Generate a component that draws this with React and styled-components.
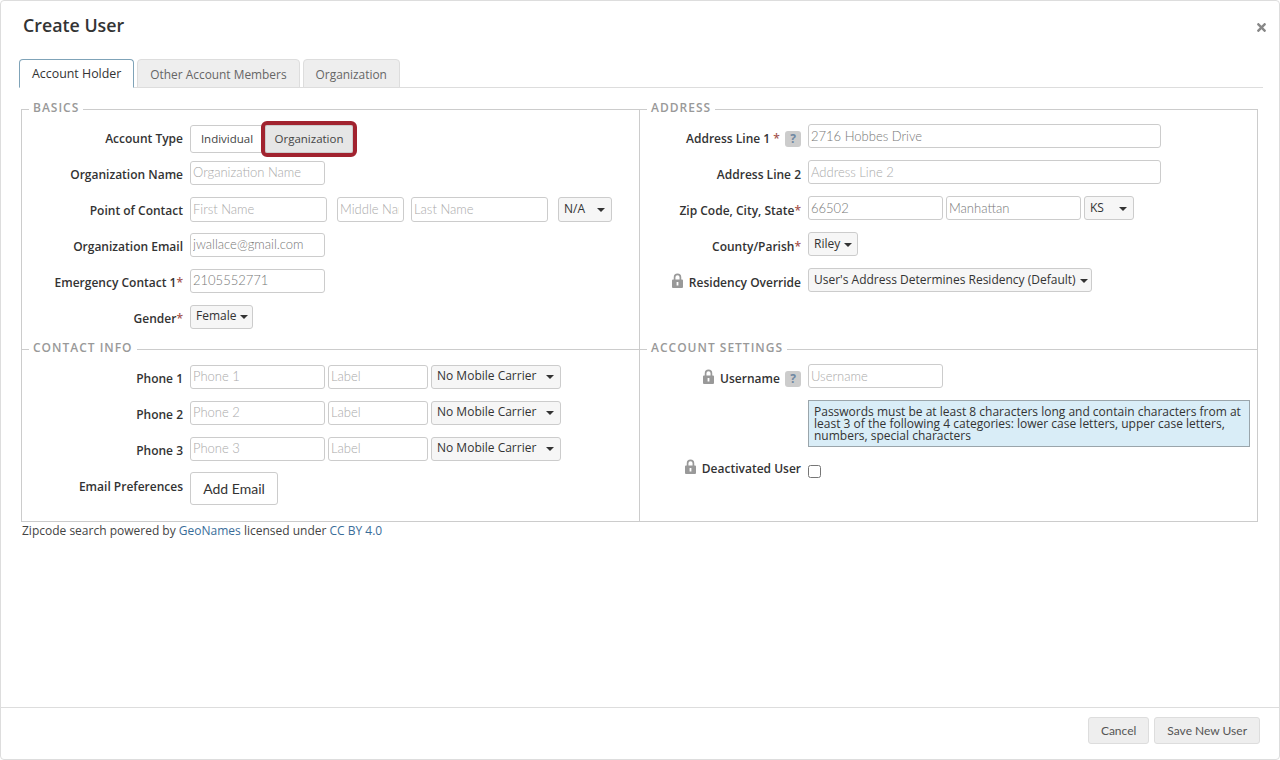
import React from 'react';
import styled, { createGlobalStyle } from 'styled-components';
import { FaTimes } from 'react-icons/fa';

const GlobalStyle = createGlobalStyle`
  html, body {
    margin: 0;
    background: #fff;
  }
  * {
    box-sizing: border-box;
  }
`;

// Modal shell
const Modal = styled.div`
  width: 1280px;
  height: 760px;
  display: flex;
  flex-direction: column;
  border: 1px solid #ddd;
  border-radius: 4px;
  background: #fff;
  color: #333;
  font-family: "Open Sans", sans-serif;
  font-size: 12px;
  overflow: hidden;
`;

const Header = styled.div`
  height: 58px;
  display: flex;
  justify-content: space-between;
  padding: 12px 11px 0 22px;
`;

const Title = styled.h1`
  margin: 0;
  font-size: 17.8px;
  line-height: 25px;
  font-weight: 600;
  color: #333;
`;

const Close = styled.div`
  margin-top: 8px;
  color: #888;
  font-size: 13px;
  line-height: 13px;
`;

// Tabs
const TabBar = styled.div`
  height: 29px;
  margin: 0 16px 0 18px;
  display: flex;
  gap: 3px;
  border-bottom: 1px solid #ddd;
`;

const Tab = styled.div`
  height: 29px;
  padding: 0 12px;
  display: flex;
  align-items: center;
  border: 1px solid ${(p) => (p.$active ? '#7fa3b8' : '#ddd')};
  border-bottom: ${(p) => (p.$active ? '1px solid #fff' : '1px solid #ddd')};
  border-radius: 4px 4px 0 0;
  background: ${(p) => (p.$active ? '#fff' : '#eee')};
  color: ${(p) => (p.$active ? '#333' : '#666')};
  font-size: ${(p) => (p.$active ? 12.4 : 11.9)}px;
  font-weight: ${(p) => (p.$active ? 500 : 400)};
`;

// Form panel
const Panel = styled.div`
  width: 1237px;
  margin: 21px 0 0 20px;
  display: grid;
  grid-template-columns: 618px 619px;
  border-right: 1px solid #ccc;
  border-bottom: 1px solid #ccc;
`;

const Column = styled.div`
  border-left: 1px solid #ccc;
`;

const Section = styled.section`
  border-top: 1px solid #ccc;
  padding: 0 0 ${(p) => p.$bottom || 0}px;
`;

const Legend = styled.h3`
  display: table;
  margin: -9px 0 6px 7px;
  padding: 0 4px;
  background: #fff;
  color: #999;
  font-size: 12px;
  line-height: 14px;
  font-weight: 600;
  letter-spacing: 1px;
`;

const Row = styled.div`
  min-height: 36px;
  display: flex;
  gap: 7px;
  align-items: flex-start;
  padding-top: ${(p) => (p.$inset === undefined ? 4 : p.$inset)}px;
`;

const Label = styled.label`
  width: 161px;
  flex: none;
  height: 18px;
  margin-top: ${(p) => (p.$offset === undefined ? 5 : p.$offset)}px;
  font-weight: 600;
  line-height: 18px;
  color: #333;
  text-align: right;
  white-space: nowrap;
`;

const Star = styled.span`
  color: #a5554f;
`;

const Help = styled.span`
  width: 16px;
  height: 16px;
  margin-left: 2px;
  display: inline-block;
  border-radius: 3px;
  background: #ccc;
  color: #6f88a3;
  font-size: 12px;
  line-height: 16px;
  font-weight: 700;
  text-align: center;
`;

const LockShape = styled.svg`
  width: 11px;
  height: 15px;
  margin-right: 6px;
  vertical-align: -1px;
  color: #999;
`;

const Lock = () => (
  <LockShape viewBox="0 0 11 15" aria-hidden="true">
    <path d="M2.6 7V4.2a2.9 2.9 0 0 1 5.8 0V7" fill="none" stroke="currentColor" strokeWidth="1.7" />
    <path
      d="M1 6.5h9a1 1 0 0 1 1 1V14a1 1 0 0 1-1 1H1a1 1 0 0 1-1-1V7.5a1 1 0 0 1 1-1zM4.6 9v3.4h1.8V9z"
      fill="currentColor"
      fillRule="evenodd"
    />
  </LockShape>
);

const Controls = styled.div`
  display: flex;
  gap: ${(p) => p.$gap || 3}px;
`;

const Input = styled.input`
  width: ${(p) => p.$w}px;
  height: ${(p) => p.$h || 24}px;
  margin-left: ${(p) => p.$ml || 0}px;
  padding: 0 4px ${(p) => (p.$pb === undefined ? 2 : p.$pb)}px 2px;
  border: 1px solid #ccc;
  border-radius: 3px;
  background: #fff;
  color: #777;
  font-family: Lato, sans-serif;
  font-size: 13px;
  font-weight: 300;
  outline: none;

  &::placeholder {
    color: #aaa;
    opacity: 1;
  }
`;

const Select = styled.div`
  width: ${(p) => p.$w}px;
  height: ${(p) => p.$h || 24}px;
  margin-left: ${(p) => p.$ml || 0}px;
  padding: 0 6px ${(p) => (p.$pb === undefined ? 3 : p.$pb)}px 5px;
  display: flex;
  align-items: center;
  justify-content: space-between;
  border: 1px solid #ccc;
  border-radius: 3px;
  background: #f6f6f6;
  color: #333;
  white-space: nowrap;

  &::after {
    content: '';
    margin: 3px 0 0 4px;
    border-top: 4px solid #333;
    border-left: 4px solid transparent;
    border-right: 4px solid transparent;
  }
`;

const ToggleGroup = styled.div`
  display: flex;
  gap: 3px;
`;

const Toggle = styled.div`
  width: ${(p) => p.$w}px;
  height: 28px;
  padding: 0 0 2px ${(p) => (p.$on ? 0 : 2)}px;
  display: flex;
  align-items: center;
  justify-content: center;
  border: 1px solid #ccc;
  border-radius: ${(p) => (p.$on ? '2px' : '3px 0 0 3px')};
  background: ${(p) => (p.$on ? '#e6e6e6' : '#fff')};
  color: #444;
  font-size: 11.5px;
  ${(p) => p.$on && 'outline: 4px solid #a1232f;'}
`;

const AddButton = styled.button`
  width: 88px;
  height: 33px;
  margin-top: -1px;
  padding: 0;
  border: 1px solid #ccc;
  border-radius: 3px;
  background: #fff;
  color: #333;
  font-family: Lato, sans-serif;
  font-size: 14px;
`;

const Notice = styled.div`
  width: 442px;
  margin-bottom: 4px;
  padding: 5px 5px 4px;
  border: 1px solid #9aa5ab;
  background: #d9edf7;
  color: #333;
  font-size: 12px;
  line-height: 12px;
`;

const Check = styled.input`
  width: 13px;
  height: 13px;
  margin: 11px 0 0 0;
`;

const Attribution = styled.p`
  margin: 0;
  padding: 0 0 0 21px;
  font-size: 12px;
  line-height: 18px;
  color: #444;
`;

const Link = styled.a`
  color: #3a6d99;
  text-decoration: none;
`;

// Footer
const Footer = styled.div`
  margin-top: auto;
  height: 52px;
  padding: 9px 19px 0 0;
  display: flex;
  justify-content: flex-end;
  gap: 5px;
  border-top: 1px solid #ddd;
`;

const FootButton = styled.button`
  height: 27px;
  padding: 0 12px;
  border: 1px solid #ddd;
  border-radius: 3px;
  background: #eee;
  color: #555;
  font-family: Lato, sans-serif;
  font-size: 12px;
`;

const App = () => {
  return (
    <>
      <GlobalStyle />
      <Modal>
        <Header>
          <Title>Create User</Title>
          <Close><FaTimes /></Close>
        </Header>

        <TabBar>
          <Tab $active>Account Holder</Tab>
          <Tab>Other Account Members</Tab>
          <Tab>Organization</Tab>
        </TabBar>

        <Panel>
          <Column>
            <Section $bottom={12}>
              <Legend>BASICS</Legend>
              <Row>
                <Label>Account Type</Label>
                <ToggleGroup>
                  <Toggle $w={72}>Individual</Toggle>
                  <Toggle $w={88} $on>Organization</Toggle>
                </ToggleGroup>
              </Row>
              <Row>
                <Label>Organization Name</Label>
                <Input $w={135} placeholder="Organization Name" />
              </Row>
              <Row>
                <Label>Point of Contact</Label>
                <Controls $gap={7}>
                  <Input $w={137} $h={25} placeholder="First Name" />
                  <Input $w={67} $h={25} $ml={3} placeholder="Middle Name" />
                  <Input $w={137} $h={25} placeholder="Last Name" />
                  <Select $w={54} $h={25} $ml={3}>N/A</Select>
                </Controls>
              </Row>
              <Row>
                <Label>Organization Email</Label>
                <Input $w={135} defaultValue="jwallace@gmail.com" />
              </Row>
              <Row>
                <Label>Emergency Contact 1<Star>*</Star></Label>
                <Input $w={135} defaultValue="2105552771" />
              </Row>
              <Row>
                <Label>Gender<Star>*</Star></Label>
                <Select $w={63}>Female</Select>
              </Row>
            </Section>

            <Section $bottom={16}>
              <Legend>CONTACT INFO</Legend>
              {[1, 2, 3].map((n) => (
                <Row key={n}>
                  <Label>Phone {n}</Label>
                  <Controls>
                    <Input $w={135} placeholder={`Phone ${n}`} />
                    <Input $w={100} placeholder="Label" />
                    <Select $w={130}>No Mobile Carrier</Select>
                  </Controls>
                </Row>
              ))}
              <Row>
                <Label>Email Preferences</Label>
                <AddButton>Add Email</AddButton>
              </Row>
            </Section>
          </Column>

          <Column>
            <Section $bottom={48}>
              <Legend>ADDRESS</Legend>
              <Row $inset={3}>
                <Label $offset={6}>Address Line 1 <Star>*</Star> <Help>?</Help></Label>
                <Input $w={353} $pb={0} defaultValue="2716 Hobbes Drive" />
              </Row>
              <Row $inset={3}>
                <Label $offset={6}>Address Line 2</Label>
                <Input $w={353} $pb={0} placeholder="Address Line 2" />
              </Row>
              <Row $inset={3}>
                <Label $offset={6}>Zip Code, City, State<Star>*</Star></Label>
                <Controls>
                  <Input $w={135} $pb={0} defaultValue="66502" />
                  <Input $w={135} $pb={0} defaultValue="Manhattan" />
                  <Select $w={50} $pb={1}>KS</Select>
                </Controls>
              </Row>
              <Row $inset={3}>
                <Label $offset={6}>County/Parish<Star>*</Star></Label>
                <Select $w={50} $pb={1}>Riley</Select>
              </Row>
              <Row $inset={3}>
                <Label $offset={5}><Lock />Residency Override</Label>
                <Select $w={284} $pb={1}>User's Address Determines Residency (Default)</Select>
              </Row>
            </Section>

            <Section $bottom={16}>
              <Legend>ACCOUNT SETTINGS</Legend>
              <Row $inset={3}>
                <Label $offset={5}><Lock />Username <Help>?</Help></Label>
                <Input $w={135} $pb={0} placeholder="Username" />
              </Row>
              <Row $inset={3}>
                <Label as="span" />
                <Notice>
                  Passwords must be at least 8 characters long and contain characters from at least 3 of the following 4 categories: lower case letters, upper case letters, numbers, special characters
                </Notice>
              </Row>
              <Row $inset={3}>
                <Label $offset={5}><Lock />Deactivated User</Label>
                <Check type="checkbox" />
              </Row>
            </Section>
          </Column>
        </Panel>

        <Attribution>
          Zipcode search powered by <Link href="#">GeoNames</Link> licensed under <Link href="#">CC BY 4.0</Link>
        </Attribution>

        <Footer>
          <FootButton>Cancel</FootButton>
          <FootButton>Save New User</FootButton>
        </Footer>
      </Modal>
    </>
  );
};

export default App;
